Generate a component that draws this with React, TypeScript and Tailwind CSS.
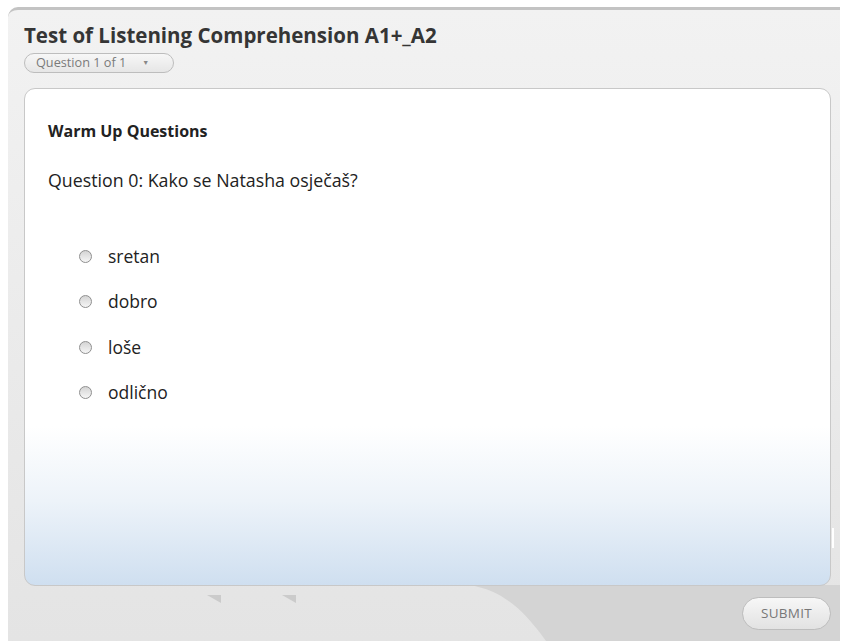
import React, { useState } from 'react';

const options = ['sretan', 'dobro', 'loše', 'odlično'];

function Notch() {
  return (
    <svg width="14" height="8" viewBox="0 0 14 8">
      <polygon points="0,0 14,0 14,8" fill="#cbcbcb" />
    </svg>
  );
}

export default function App() {
  const [answer, setAnswer] = useState<string | null>(null);

  return (
    <div className="w-[842px] h-[644px] bg-white pt-[7px] overflow-hidden" style={{ fontFamily: '"Open Sans", "Liberation Sans", sans-serif' }}>
      <div className="relative ml-2 w-[832px] h-[634px] rounded-tl-[10px] border-t-[3px] border-[#c3c3c3] bg-gradient-to-b from-[#f2f2f2] to-[#e4e4e4] overflow-hidden">
        {/* footer swoosh */}
        <svg className="absolute left-0 bottom-0" width="832" height="56" viewBox="0 0 832 56">
          <path d="M462 0 C495 6 515 24 538 56 L832 56 L832 0 Z" fill="#d4d4d4" />
        </svg>

        <div className="relative flex flex-col h-full px-4">
          <h1 className="mt-[11px] text-[20.5px] font-bold text-[#353535] leading-[28px]">
            Test of Listening Comprehension A1+_A2
          </h1>
          <button className="mt-[4px] w-[150px] h-[20px] flex items-center pl-[11px] rounded-full border border-[#bdbdbd] bg-gradient-to-b from-[#f7f7f7] to-[#e6e6e6] text-[12.7px] text-[#7a7a7a]">
            Question 1 of 1
            <span className="ml-[16px] text-[7px] text-[#888]">▼</span>
          </button>

          <div className="relative mt-[15px] w-[807px] h-[498px] rounded-[11px] border border-[#c8c8c8] bg-[linear-gradient(to_bottom,#ffffff_0%,#ffffff_68%,#edf3f9_83%,#cfdff0_100%)] px-[23px]">
            <h2 className="mt-[31px] text-[16px] font-bold text-[#222] leading-[22px]">Warm Up Questions</h2>
            <p className="mt-[26px] text-[17.8px] text-[#222] leading-[24px]">Question 0: Kako se Natasha osječaš?</p>

            <div className="mt-[53px] flex flex-col gap-[23.5px] pl-[31px]">
              {options.map((o) => (
                <label key={o} className="flex items-center h-[22px] cursor-pointer" onClick={() => setAnswer(o)}>
                  <span className="w-[13px] h-[13px] rounded-full border-[1.5px] border-[#8f8f8f] bg-gradient-to-b from-[#d4d4d4] to-[#f6f6f6] flex items-center justify-center">
                    {answer === o && <span className="w-[6px] h-[6px] rounded-full bg-[#555]" />}
                  </span>
                  <span className="ml-[16px] text-[17.5px] text-[#222]">{o}</span>
                </label>
              ))}
            </div>

            <span className="absolute right-[-4px] bottom-[37px] w-[2px] h-[20px] bg-white" />
          </div>

          <div className="relative flex-1 w-[807px] flex items-start justify-end">
            <span className="absolute left-[183px] top-[9px] flex">
              <Notch />
            </span>
            <span className="absolute left-[258px] top-[9px] flex">
              <Notch />
            </span>
            <button className="mt-[11px] w-[89px] h-[33px] rounded-full border border-[#bdbdbd] bg-gradient-to-b from-[#f7f7f7] to-[#e2e2e2] text-[13.5px] text-[#777] tracking-[0.3px]">
              SUBMIT
            </button>
          </div>
        </div>
      </div>
    </div>
  );
}
